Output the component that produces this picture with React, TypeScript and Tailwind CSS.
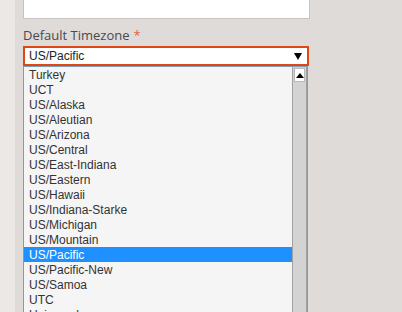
import React from 'react';

const zones = [
  'Turkey',
  'UCT',
  'US/Alaska',
  'US/Aleutian',
  'US/Arizona',
  'US/Central',
  'US/East-Indiana',
  'US/Eastern',
  'US/Hawaii',
  'US/Indiana-Starke',
  'US/Michigan',
  'US/Mountain',
  'US/Pacific',
  'US/Pacific-New',
  'US/Samoa',
  'UTC',
  'Universal',
];

const App: React.FC = () => {
  const selected = 'US/Pacific';

  return (
    <div className="flex w-[402px] h-[312px] overflow-hidden bg-[#dfdbd8]">
      <div className="w-[15px] shrink-0 bg-[#ebe8e5]"></div>
      <div className="flex flex-col pl-[8px] w-[310px] shrink-0 min-h-0">
        {/* textarea bottom */}
        <div className="h-[19px] shrink-0 w-[287px] bg-white border border-t-0 border-[#c9c1c1]"></div>

        <div
          className="mt-[7px] shrink-0 h-[20px] flex items-center text-[13px] text-[#4a4a4a]"
          style={{ fontFamily: '"Open Sans", sans-serif' }}
        >
          Default Timezone <span className="ml-[4px] text-[#e2643a]">*</span>
        </div>

        <div
          className="shrink-0 h-[20px] w-[286px] border-2 border-[#dd4814] bg-white flex items-center justify-between pl-[4px] pr-[5px] text-[12px] text-[#222]"
          style={{ fontFamily: '"Liberation Sans", Arial, sans-serif' }}
        >
          <span>US/Pacific</span>
          <svg width="8" height="7" viewBox="0 0 8 7">
            <polygon points="0,0 8,0 4,7" fill="#000" />
          </svg>
        </div>

        <div
          className="flex w-[285px] flex-1 min-h-0 overflow-hidden border border-b-0 border-[#7f9db9] bg-[#f5f5f5]"
          style={{ fontFamily: '"Liberation Sans", Arial, sans-serif' }}
        >
          <div className="flex-1 flex flex-col">
            {zones.map((z) => (
              <div
                key={z}
                className={`h-[15px] shrink-0 flex items-center pl-[5px] text-[12px] ${
                  z === selected ? 'bg-[#1e90ff] text-white' : 'text-[#333]'
                }`}
              >
                {z}
              </div>
            ))}
          </div>
          <div className="w-[15px] shrink-0 border-l border-r border-[#a0a0a0] bg-[#d3d3d3] flex flex-col pt-[1px]">
            <div className="h-[14px] shrink-0 mx-[1px] bg-white border border-[#b8b8b8] flex items-center justify-center">
              <svg width="8" height="5" viewBox="0 0 8 5">
                <polygon points="0,5 8,5 4,0" fill="#000" />
              </svg>
            </div>
          </div>
        </div>
      </div>
      <div className="flex-1"></div>
    </div>
  );
};

export default App;
